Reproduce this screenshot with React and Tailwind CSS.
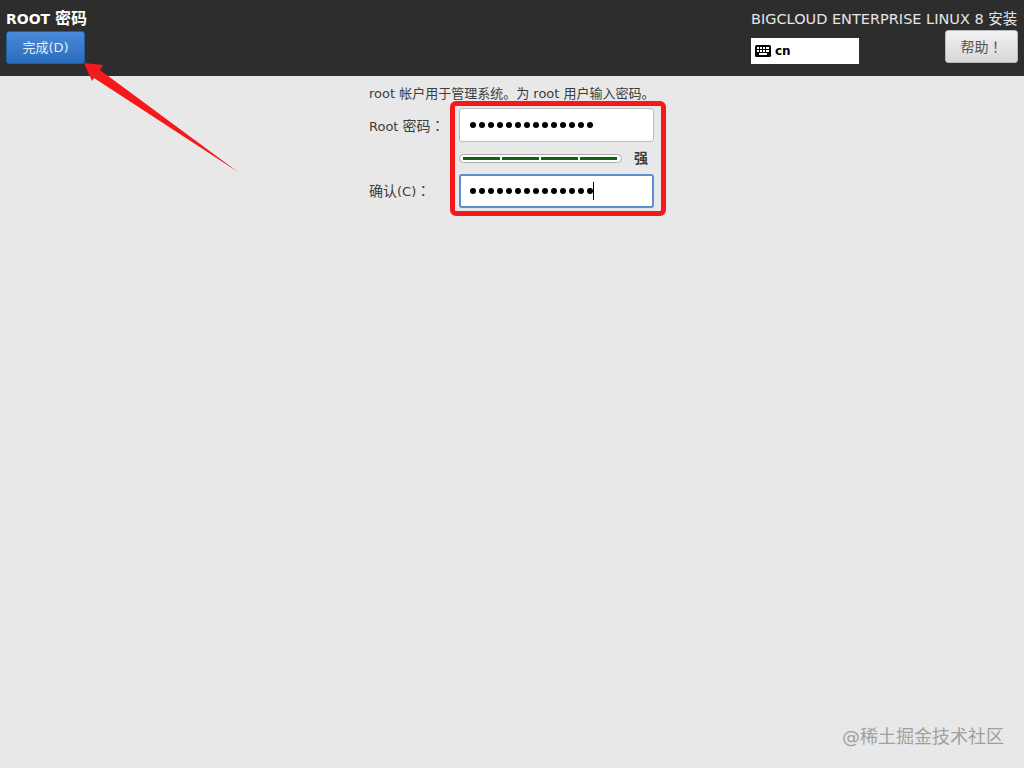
const font = { fontFamily: '"DejaVu Sans", "Noto Sans CJK SC", sans-serif' };

// the full-width marks sit centred in the reference, which the TC cut does
const Mark = ({ children }) => (
  <span className="font-['Noto_Sans_CJK_TC']">{children}</span>
);

const Dots = () => (
  <div className="flex gap-[3px]">
    {Array.from({ length: 14 }).map((_, i) => (
      <span key={i} className="w-[6px] h-[6px] rounded-full bg-black" />
    ))}
  </div>
);

const Segment = () => <span className="w-[37px] h-[3px] bg-[#12630f]" />;

const App = () => {
  return (
    <div className="relative w-[1024px] h-[768px] overflow-hidden bg-[#e8e8e8] text-[#3c3c3c]" style={font}>
      <header className="h-[76px] bg-[#2d2d2d] flex justify-between px-[6px]">
        <div>
          <div className="pt-[9px] text-[14px] leading-[20px] font-bold text-white">
            ROOT <span className="text-[16px]">密码</span>
          </div>
          <button className="mt-[2px] w-[79px] h-[33px] pt-[1px] rounded-[3px] border border-[#1c5ea8] bg-gradient-to-b from-[#4a8ad8] to-[#2a6cbc] text-[13px] text-[#e8eef6]">
            完成(D)
          </button>
        </div>
        <div className="w-[267px] pt-[9px]">
          <div className="text-[14.5px] leading-[20px] text-[#e6e6e6] whitespace-nowrap">BIGCLOUD ENTERPRISE LINUX 8 安装</div>
          <div className="flex justify-between items-start">
            <div className="mt-[9px] w-[108px] h-[26px] bg-white flex items-center pl-[4px] gap-[4px]">
              <svg width="16" height="12" viewBox="0 0 16 12">
                <rect width="16" height="12" rx="1.5" fill="#000" />
                <g fill="#fff">
                  <rect x="2" y="2" width="2" height="2" />
                  <rect x="5" y="2" width="2" height="2" />
                  <rect x="8" y="2" width="2" height="2" />
                  <rect x="11" y="2" width="3" height="2" />
                  <rect x="2" y="5" width="2" height="2" />
                  <rect x="5" y="5" width="2" height="2" />
                  <rect x="8" y="5" width="2" height="2" />
                  <rect x="11" y="5" width="3" height="2" />
                  <rect x="4" y="8" width="8" height="2" />
                </g>
              </svg>
              <span className="text-[12px] font-bold text-black">cn</span>
            </div>
            <button className="mt-[1px] w-[73px] h-[33px] rounded-[3px] border border-[#b8b8b8] bg-gradient-to-b from-[#f2f2f2] to-[#d8d8d8] text-[14px] text-[#555]">
              帮助<Mark>！</Mark>
            </button>
          </div>
        </div>
      </header>

      <main className="ml-[369px] pt-[9px] w-[300px]">
        <p className="text-[13px] leading-[18px] whitespace-nowrap">root 帐户用于管理系统。为 root 用户输入密码。</p>
        <div className="mt-[5px] flex items-center">
          <label className="w-[90px] pt-[2px] text-[13px] whitespace-nowrap">
            Root <span className="text-[14px]">密码<Mark>：</Mark></span>
          </label>
          <div className="w-[195px] h-[34px] bg-white border border-[#bdbdbd] rounded-[3px] flex items-center pl-[10px]">
            <Dots />
          </div>
        </div>
        <div className="mt-[6px] ml-[90px] h-[20px] flex items-start">
          <div className="mt-[6px] w-[163px] h-[9px] bg-white border border-[#aaa] rounded-full flex items-center gap-[2px] px-[3px]">
            <Segment />
            <Segment />
            <Segment />
            <Segment />
          </div>
          <span className="ml-[12px] text-[14px] leading-[20px] font-bold">强</span>
        </div>
        <div className="mt-[6px] flex items-center">
          <label className="w-[90px] text-[13px] whitespace-nowrap">
            <span className="text-[14px]">确认</span>(C)<span className="text-[14px]"><Mark>：</Mark></span>
          </label>
          <div className="w-[195px] h-[34px] bg-white border-2 border-[#5a90d0] rounded-[3px] flex items-center pl-[9px]">
            <Dots />
            <span className="w-[1px] h-[18px] bg-black" />
          </div>
        </div>
      </main>

      {/* annotations drawn over the screenshot */}
      <div className="absolute left-[450px] top-[101px] w-[216px] h-[115px] border-[5px] border-[#f5191c] rounded-[6px]" />
      <svg className="absolute left-0 top-0" width="260" height="180" viewBox="0 0 260 180">
        <polygon points="84,63 103,65 100,70 238,172 94,78 92,81" fill="#f5191c" />
      </svg>
      <div className="absolute left-[842px] top-[725px] text-[18px] leading-[24px] text-[#a0a0a0] whitespace-nowrap">@稀土掘金技术社区</div>
    </div>
  );
};

export default App;
